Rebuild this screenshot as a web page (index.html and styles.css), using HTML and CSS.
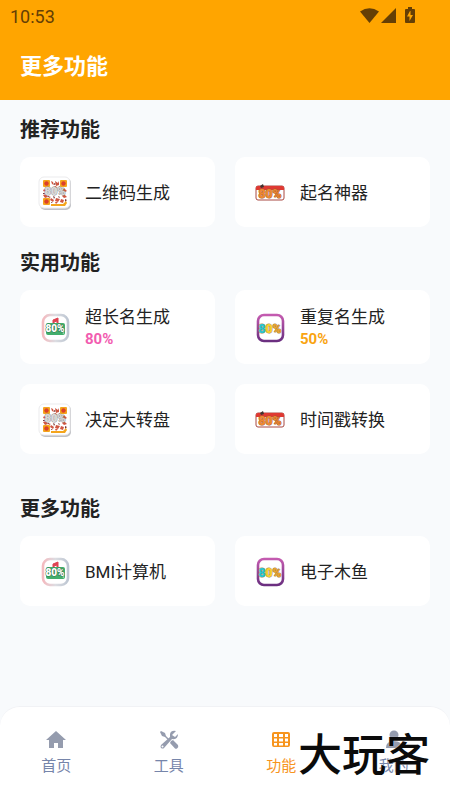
FILE: index.html
```html
<!DOCTYPE html>
<html lang="zh-CN">
<head>
<meta charset="utf-8">
<meta name="viewport" content="width=device-width, initial-scale=1">
<title>更多功能</title>
<link rel="stylesheet" href="styles.css">
</head>
<body>
<svg class="defs" aria-hidden="true">
  <defs>
    <linearGradient id="silver" x1="0" x2="1" y1="0" y2="0"><stop offset="0" stop-color="#f4babf"/><stop offset=".5" stop-color="#dcdde2"/><stop offset="1" stop-color="#bdc6d2"/></linearGradient>
    <linearGradient id="violet" x1="0" x2="0" y1="0" y2="1"><stop offset="0" stop-color="#c45bb0"/><stop offset="1" stop-color="#6b2f80"/></linearGradient>
  </defs>
  <symbol id="qr" viewBox="0 0 40 40">
    <rect x="5" y="5" width="31" height="32" rx="5" fill="#c0c1c5"/>
    <rect x="4" y="4" width="31" height="31" rx="5" fill="#fff" stroke="#ebebed"/>
    <path d="M16 8l2 1 1 3-2-1zM20 8l3 2 1-2v4l-3 1zM9 16l3 1-1 2-3-1zM29 15l3 3-2 1-3-2zM8 22l3-1 2 3-3 1zM16 25l3 2-1 2-3-2zM21 25l4 1-2 3-3-1zM29 21l3 3-3 1-2-2zM26 26l3 1-1 3-3-1zM18 14l3-1 1 2zM13 23l3 1-2 1zM20 29h3l-2 2z" fill="#cf5641"/>
    <path d="M19 10l2 1-2 1zM24 13l2 2h-2zM13 15l2 1-2 1zM8 20h2v1H8zM30 26l2 1-2 2zM18 23l2 1-1 2zM12 24l2-1v1zM23 23l2 1-1 1zM16 29l2 1h-2z" fill="#7b3632"/>
    <g fill="#f4a51c"><rect x="8" y="7" width="7" height="7" rx="1"/><rect x="25" y="7" width="7" height="7" rx="1"/><rect x="8" y="25" width="7" height="7" rx="1"/><path d="M16 31h12l3-3 1 2-2 3H16z"/></g>
    <g fill="#dc402b"><circle cx="11.500" cy="10.500" r="2.200"/><circle cx="28.500" cy="10.500" r="2.200"/><circle cx="11.500" cy="28.500" r="2.200"/></g>
  </symbol>
  <symbol id="banner" viewBox="0 0 40 40">
    <rect x="6" y="13" width="28" height="14" rx="2" fill="#fff" stroke="#a84842"/>
    <path d="M6 17v-2q0-2 2-2h24q2 0 2 2v2z" fill="#df3932"/>
    <path d="M10 13l3-2 1 3-3 1z" fill="#40332f"/>
  </symbol>
  <symbol id="ticket" viewBox="0 0 40 40">
    <rect x="8" y="7" width="25" height="26" rx="7" fill="#fff" stroke="url(#silver)" stroke-width="2.600"/>
    <path d="M18 16v-4l5-2v6h-1v-3l-3 1v2z" fill="#df4352" stroke="#df4352"/>
    <rect x="11" y="15" width="19" height="12" rx="2" fill="#42ae6c"/>
    <path d="M12 16l2 1-2 2zM29 26l-2-1 2-2z" fill="#a5e2b5"/>
  </symbol>
  <symbol id="badge" viewBox="0 0 40 40">
    <rect x="8" y="7" width="25" height="26" rx="6" fill="#fff" stroke="url(#violet)" stroke-width="2.600"/>
  </symbol>
</svg>
<div class="app">
  <header class="header">
    <div class="status">
      <span>10:53</span>
      <svg class="status-icons" viewBox="0 0 56 18" aria-hidden="true">
        <path d="M0 4.500Q9.500-2 19 4.500L9.500 16z"/>
        <path d="M36 1v15H21z"/>
        <path d="M48 0h4v2h2q1 0 1 1v12q0 1-1 1h-8q-1 0-1-1V3q0-1 1-1h2z"/>
        <path class="bolt" d="M50 4l-3 5.500h2.500V14l3.500-6h-2.500V4z"/>
      </svg>
    </div>
    <h1>更多功能</h1>
  </header>
  <main class="content">
    <section>
      <h2>推荐功能</h2>
      <div class="grid">
        <button class="card"><svg class="icon" viewBox="0 0 40 40" aria-hidden="true"><use href="#qr"/><text x="20" y="22" class="qr-text">80%</text></svg><span>二维码生成</span></button>
        <button class="card"><svg class="icon" viewBox="0 0 40 40" aria-hidden="true"><use href="#banner"/><text x="20" y="25" class="banner-text">80%</text></svg><span>起名神器</span></button>
      </div>
    </section>
    <section>
      <h2>实用功能</h2>
      <div class="grid">
        <button class="card"><svg class="icon" viewBox="0 0 40 40" aria-hidden="true"><use href="#ticket"/><text x="20" y="24" class="ticket-text">80%</text></svg><span>超长名生成<b class="rate pink">80%</b></span></button>
        <button class="card"><svg class="icon" viewBox="0 0 40 40" aria-hidden="true"><use href="#badge"/><text x="20" y="25" class="badge-text"><tspan class="teal">8</tspan><tspan class="yellow">0</tspan><tspan class="amber">%</tspan></text></svg><span>重复名生成<b class="rate orange">50%</b></span></button>
        <button class="card"><svg class="icon" viewBox="0 0 40 40" aria-hidden="true"><use href="#qr"/><text x="20" y="22" class="qr-text">80%</text></svg><span>决定大转盘</span></button>
        <button class="card"><svg class="icon" viewBox="0 0 40 40" aria-hidden="true"><use href="#banner"/><text x="20" y="25" class="banner-text">80%</text></svg><span>时间戳转换</span></button>
      </div>
    </section>
    <section class="more">
      <h2>更多功能</h2>
      <div class="grid">
        <button class="card"><svg class="icon" viewBox="0 0 40 40" aria-hidden="true"><use href="#ticket"/><text x="20" y="24" class="ticket-text">80%</text></svg><span>BMI计算机</span></button>
        <button class="card"><svg class="icon" viewBox="0 0 40 40" aria-hidden="true"><use href="#badge"/><text x="20" y="25" class="badge-text"><tspan class="teal">8</tspan><tspan class="yellow">0</tspan><tspan class="amber">%</tspan></text></svg><span>电子木鱼</span></button>
      </div>
    </section>
  </main>
  <nav class="tabs">
    <a href="#home"><svg class="tab-icon" viewBox="0 0 22 22" aria-hidden="true"><path d="M11 2L1 11h3v8h5v-5h4v5h5v-8h3z"/></svg>首页</a>
    <a href="#tools"><svg class="tab-icon" viewBox="0 0 22 22" aria-hidden="true"><path d="M3 2l4 2 1 3 4 4-1 1-4-4-3-1-2-4zM12 14l1-2 2-1 5 5q1 2-1 3.500-1 .500-2 0z"/><path d="M18 2q-5-1-6 3v3l-9 8q-1 2 0 3 2 1 3 0l8-9q6 1 6-5l-3 3-3-2zM4.500 16.500a1 1 0 1 1 0 2 1 1 0 0 1 0-2z" fill-rule="evenodd"/></svg>工具</a>
    <a href="#features" class="active" aria-current="page"><svg class="tab-icon" viewBox="0 0 22 22" aria-hidden="true"><path fill-rule="evenodd" d="M4 3h14q2 0 2 2v11q0 2-2 2H4q-2 0-2-2V5q0-2 2-2zM4 5v3h3V5zm5 0v3h4V5zm6 0v3h3V5zM4 9.500v3h3v-3zm5 0v3h4v-3zm6 0v3h3v-3zM4 14v2.500h3V14zm5 0v2.500h4V14zm6 0v2.500h3V14z"/></svg>功能</a>
    <a href="#me"><svg class="tab-icon" viewBox="0 0 22 22" aria-hidden="true"><circle cx="11" cy="6" r="4.500"/><path d="M3 19q0-7 8-7t8 7z"/></svg>我的</a>
    <span class="watermark">大玩客</span>
  </nav>
</div>
</body>
</html>
```

FILE: styles.css
```css
* { box-sizing: border-box; }
body {
  margin: 0;
  background: #f8fafc;
  color: #222;
  font-family: Roboto, "Noto Sans CJK SC", sans-serif;
}
.defs { position: absolute; width: 0; height: 0; }
.app { display: flex; flex-direction: column; min-height: 100vh; }
.header { background: #ffa500; padding: 0 20px 17px; }
.status {
  display: flex;
  justify-content: space-between;
  align-items: center;
  height: 32px;
  margin: 0 -10px;
  padding-right: 24px;
  color: #653f05;
  font-size: 18px;
}
.status-icons { width: 56px; height: 18px; fill: #653f05; }
.status-icons .bolt { fill: #ffa500; }
h1, h2 { margin: 0; font-weight: 700; }
h1 { margin-top: 18px; font-size: 22px; line-height: 33px; color: #fff; }
h2 { margin-bottom: 12px; font-size: 20px; line-height: 30px; }
.content {
  flex: 1;
  display: flex;
  flex-direction: column;
  gap: 21px;
  padding: 15px 20px 20px;
}
.more { margin-top: 19px; }
.grid { display: grid; grid-template-columns: 1fr 1fr; gap: 20px; }
.card {
  display: flex;
  align-items: center;
  gap: 10px;
  min-height: 70px;
  padding: 14px 15px 12px;
  border: 0;
  border-radius: 10px;
  background: #fff;
  color: #222;
  font: inherit;
  font-size: 17px;
  line-height: 26px;
  text-align: left;
}
.icon { flex: none; width: 40px; height: 40px; }
.rate { display: block; font-size: 15px; line-height: 18px; padding-bottom: 4px; }
.pink { color: #f25cb0; }
.orange { color: #f9a411; }
.qr-text, .banner-text, .ticket-text, .badge-text {
  font-family: Roboto, sans-serif;
  font-weight: 900;
  text-anchor: middle;
  paint-order: stroke;
}
.qr-text { font-size: 11px; fill: #dadada; stroke: #999; }
.banner-text { font-size: 12px; fill: #ee8932; stroke: #a5562b; }
.ticket-text { font-size: 10px; fill: #fff; stroke: #37724a; }
.badge-text { font-size: 12px; stroke: #a58a50; }
.teal { fill: #28c4d0; }
.yellow { fill: #fbd02a; }
.amber { fill: #f0a42a; }
.tabs {
  position: sticky;
  bottom: 0;
  display: grid;
  grid-template-columns: repeat(4, 1fr);
  padding: 22px 0;
  border-top: 1px solid #f1f2f5;
  border-radius: 20px 20px 0 0;
  background: #fff;
}
.tabs a {
  display: flex;
  flex-direction: column;
  align-items: center;
  gap: 4px;
  color: #7685aa;
  font-size: 15px;
  line-height: 23px;
  text-decoration: none;
}
.tab-icon { width: 22px; height: 22px; fill: #959cae; }
.tabs .active { color: #f7941d; }
.active .tab-icon { fill: #f7941d; }
.watermark {
  position: absolute;
  right: 20px;
  bottom: 22px;
  color: #0b0b0b;
  font-size: 44px;
  font-weight: 500;
  line-height: 44px;
  text-shadow: 0 0 1px #fff;
  pointer-events: none;
}
```
